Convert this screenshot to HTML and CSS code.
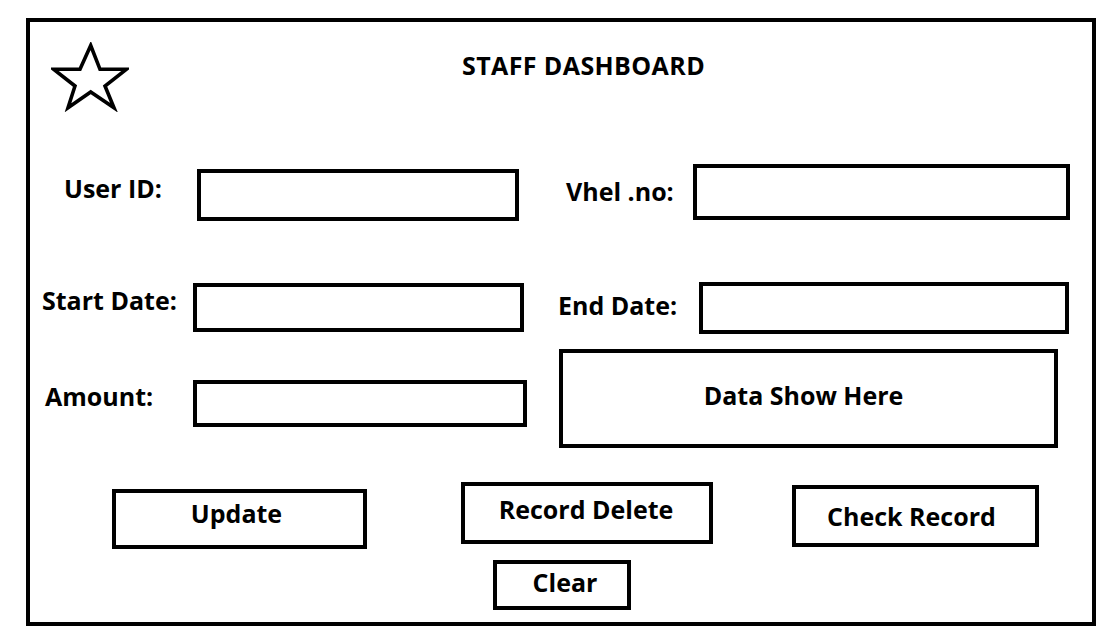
FILE: index.html
```html
<!DOCTYPE html>
<html lang="en">
<head>
    <meta charset="UTF-8">
    <meta name="viewport" content="width=device-width, initial-scale=1.0">
    <title>Staff Dashboard</title>
    <link rel="stylesheet" href="styles.css">
</head>
<body>
    <div class="frame">
        <div class="header">
            <svg class="logo" width="78" height="70" viewBox="0 0 78 70">
                <polygon points="39.7,3.5 49,27.3 75.2,27.3 54,44 63,65.8 39.7,50 17,65.8 24,44 2.8,27.3 29,27.3"
                         fill="none" stroke="#000" stroke-width="3.6" stroke-linejoin="miter"/>
            </svg>
            <h1 class="title">STAFF DASHBOARD</h1>
        </div>

        <div class="row row-1">
            <label class="label" for="userId">User ID:</label>
            <input type="text" id="userId" class="box">
            <label class="label" for="vhelNo">Vhel .no:</label>
            <input type="text" id="vhelNo" class="box">
        </div>

        <div class="row row-2">
            <label class="label" for="startDate">Start Date:</label>
            <input type="text" id="startDate" class="box">
            <label class="label" for="endDate">End Date:</label>
            <input type="text" id="endDate" class="box">
        </div>

        <div class="row row-3">
            <label class="label" for="amount">Amount:</label>
            <input type="text" id="amount" class="box">
            <div class="data-box">Data Show Here</div>
        </div>

        <div class="row actions">
            <button class="btn btn-update">Update</button>
            <button class="btn btn-delete">Record Delete</button>
            <button class="btn btn-check">Check Record</button>
        </div>

        <div class="row clear-row">
            <button class="btn btn-clear">Clear</button>
        </div>
    </div>
</body>
</html>
```

FILE: styles.css
```css
* {
    box-sizing: border-box;
}

body {
    margin: 0;
    padding: 0;
    background-color: #fff;
    font-family: "Open Sans", "Liberation Sans", sans-serif;
    font-weight: bold;
    font-size: 25px;
    line-height: 25px;
    color: #000;
}

.frame {
    margin: 18px 0 0 26px;
    width: 1070px;
    height: 608px;
    border: 4px solid #000;
    display: flex;
    flex-direction: column;
}

.header {
    display: flex;
    align-items: flex-start;
    height: 142px;
}

.logo {
    display: block;
    margin: 20px 0 0 21px;
}

.title {
    margin: 31px 0 0 333px;
    font-size: 25px;
    line-height: 25px;
    font-weight: bold;
    letter-spacing: 0.4px;
}

.row {
    display: flex;
    align-items: flex-start;
}

.label {
    display: block;
}

.box {
    display: block;
    border: 4px solid #000;
    border-radius: 0;
    background: #fff;
    padding: 0 8px;
    font: inherit;
    outline: none;
}

/* row 1 */
.row-1 .label:nth-of-type(1) { margin: 12px 0 0 34px; width: 133px; }
.row-1 .box:nth-of-type(1)   { margin-top: 5px; width: 322px; height: 52px; }
.row-1 .label:nth-of-type(2) { margin: 15px 0 0 47px; width: 127px; }
.row-1 .box:nth-of-type(2)   { width: 377px; height: 56px; }

/* row 2 */
.row-2 { margin-top: 61px; }
.row-2 .label:nth-of-type(1) { margin: 6px 0 0 12px; width: 151px; }
.row-2 .box:nth-of-type(1)   { margin-top: 1px; width: 331px; height: 49px; }
.row-2 .label:nth-of-type(2) { margin: 11px 0 0 34px; width: 141px; }
.row-2 .box:nth-of-type(2)   { width: 370px; height: 52px; }

/* row 3 */
.row-3 { margin-top: 15px; }
.row-3 .label { margin: 35px 0 0 15px; width: 148px; }
.row-3 .box   { margin-top: 31px; width: 334px; height: 47px; }

.data-box {
    margin-left: 32px;
    width: 499px;
    height: 99px;
    border: 4px solid #000;
    display: flex;
    align-items: center;
    justify-content: center;
    padding: 0 10px 6px 0;
}

/* buttons */
.actions { margin-top: 34px; }

.btn {
    display: flex;
    align-items: center;
    justify-content: center;
    border: 4px solid #000;
    border-radius: 0;
    background: #fff;
    color: #000;
    font: inherit;
    padding: 0;
    cursor: pointer;
}

.btn-update {
    margin: 7px 0 0 82px;
    width: 255px;
    height: 60px;
    padding: 0 6px 12px 0;
}

.btn-delete {
    margin-left: 94px;
    width: 252px;
    height: 62px;
    padding: 0 2px 8px 0;
}

.btn-check {
    margin: 3px 0 0 79px;
    width: 247px;
    height: 62px;
    padding: 0 8px 0 0;
}

.clear-row { margin-top: 11px; }

.btn-clear {
    margin-left: 463px;
    width: 138px;
    height: 50px;
    padding: 0 0 6px 6px;
}
```
